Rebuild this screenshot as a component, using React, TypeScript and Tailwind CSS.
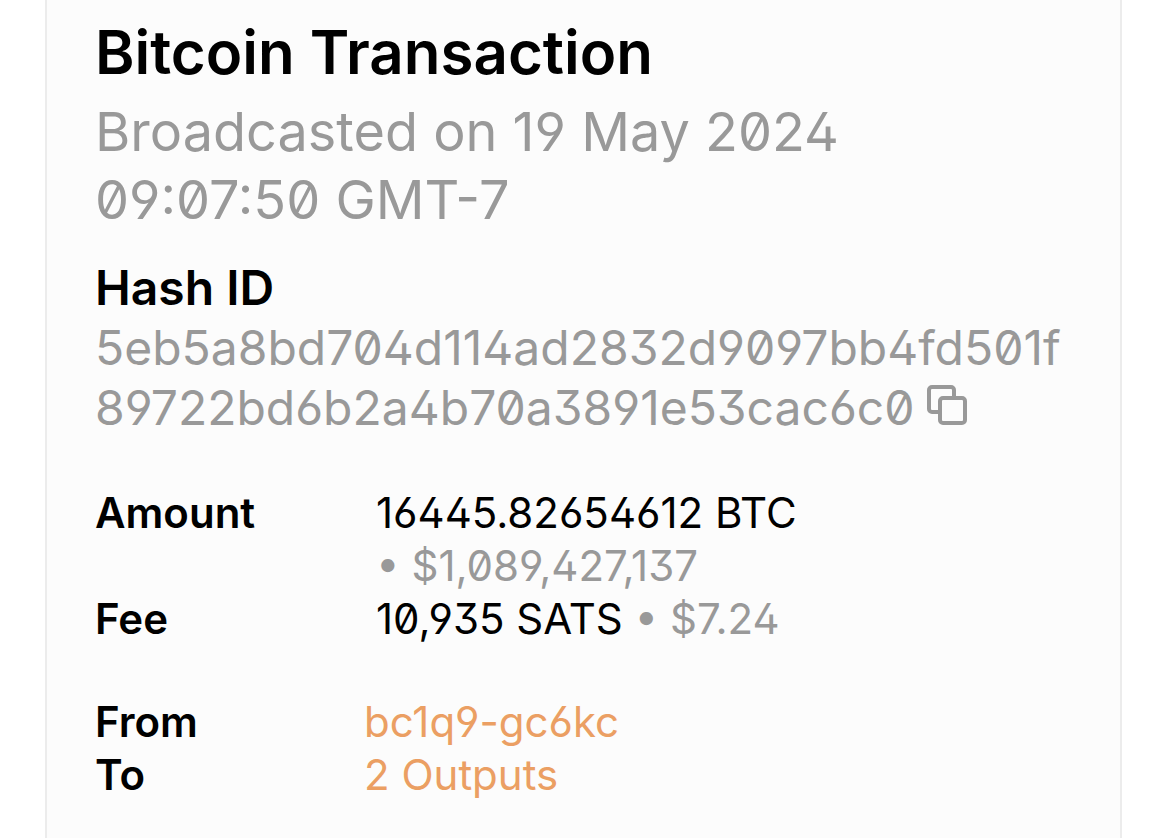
import React from 'react';

const HASH_LINES = [
  '5eb5a8bd704d114ad2832d9097bb4fd501f',
  '89722bd6b2a4b70a3891e53cac6c0',
];

const CopyIcon: React.FC = () => (
  <svg width="40" height="40" viewBox="0 0 40 40" fill="none" stroke="currentColor" strokeWidth="4" strokeLinejoin="round">
    <rect x="13" y="13" width="25" height="25" rx="3" />
    <path d="M13 27H5a3 3 0 0 1-3-3V5a3 3 0 0 1 3-3h19a3 3 0 0 1 3 3v8" />
  </svg>
);

const App: React.FC = () => {
  return (
    <div className="min-h-screen bg-white pr-12 pl-[45px] font-['Inter',sans-serif] text-black">
      <main className="min-h-screen border-x-2 border-[#ececec] bg-[#fcfcfc] px-12 pt-4 [font-feature-settings:'zero','ss01','cv02','cv03','cv04','cv09']">
        <h1 className="text-[60px] leading-[72px] font-semibold">Bitcoin Transaction</h1>
        <p className="mt-[10px] text-[54px] leading-[68px] text-[#999999]">
          Broadcasted on 19 May 2024
          <br />
          09:07:50 GMT-7
        </p>

        <h2 className="mt-6 text-[48px] leading-[60px] font-semibold">Hash ID</h2>
        <p className="text-[48px] leading-[60px] text-[#999999]">
          {HASH_LINES[0]}
          <br />
          {HASH_LINES[1]}
          <button type="button" aria-label="Copy hash" className="ml-3 inline-block align-baseline">
            <CopyIcon />
          </button>
        </p>

        <dl className="mt-12 grid grid-cols-[281px_1fr] text-[42px] leading-[53px]">
          <dt className="font-semibold">Amount</dt>
          <dd>
            16445.82654612 BTC
            <br />
            <span className="text-[#999999]">• $1,089,427,137</span>
          </dd>
          <dt className="font-semibold">Fee</dt>
          <dd>
            10,935 SATS <span className="text-[#999999]">• $7.24</span>
          </dd>
        </dl>

        <dl className="mt-[50px] grid grid-cols-[269px_1fr] text-[42px] leading-[53px]">
          <dt className="font-semibold">From</dt>
          <dd>
            <a href="#from" className="text-[#eb9f63]">bc1q9-gc6kc</a>
          </dd>
          <dt className="font-semibold">To</dt>
          <dd>
            <a href="#outputs" className="text-[#eb9f63]">2 Outputs</a>
          </dd>
        </dl>
      </main>
    </div>
  );
};

export default App;
